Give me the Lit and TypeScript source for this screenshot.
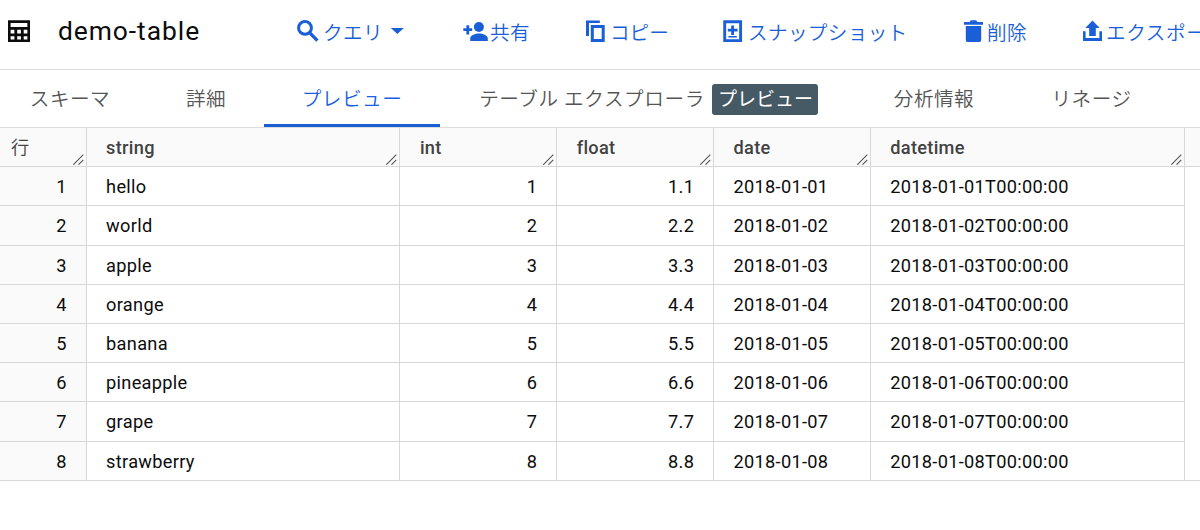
import { LitElement, html, css, svg } from "lit";
import { customElement } from "lit/decorators.js";
import { classMap } from "lit/directives/class-map.js";

const ICONS = {
  table: svg`<path fill-rule="evenodd" d="M2 4.3h22v21.8H2zM4.6 7v4h16.8V7zM4.6 13.8v3.6h3.8v-3.6zM11.2 13.8v3.6h3.7v-3.6zM17.7 13.8v3.6h3.7v-3.6zM4.6 20.3v3.3h3.8v-3.3zM11.2 20.3v3.3h3.7v-3.3zM17.7 20.3v3.3h3.7v-3.3z"/>`,
  search: svg`<circle cx="11" cy="11.9" r="6.4" fill="none" stroke="currentColor" stroke-width="3"/><path d="M15.3 16.4L23.4 24.6" stroke="currentColor" stroke-width="3.4" fill="none"/>`,
  share: svg`<circle cx="18.9" cy="11" r="5"/><path d="M10.2 25v-2.6c0-3.3 5.2-4.9 8.8-4.9s8.8 1.6 8.8 4.9V25z"/><path d="M6.4 9.2v3.1H3.3v2.7h3.1v3.4h2.8V15h3v-2.7h-3V9.2z"/>`,
  copy: svg`<path d="M3 4.4h13.8v2.7H6v12.9H3z"/><path d="M9.3 10.5h10.9v14H9.3z" fill="none" stroke="currentColor" stroke-width="3"/>`,
  snapshot: svg`<path d="M4.7 5.7h15.9v18.9H4.7z" fill="none" stroke="currentColor" stroke-width="2.9"/><path d="M11.2 9.4h2.8v3.4h3.6v2.6H14V19h-2.8v-3.6H7.8v-2.6h3.4zM8.4 20h8.4v1.5H8.4z"/>`,
  trash: svg`<path d="M3 6.1h5.6l1.2-1.8h5.4l1.2 1.8H22v2.7H3zM4.8 10.1h15.4v13.7c0 1.5-.9 2.3-2.3 2.3H7.1c-1.4 0-2.3-.8-2.3-2.3z"/>`,
  exportUp: svg`<path d="M12.5 4.4l7.2 7.7h-3.9v8H9.2v-8H5.3z"/><path d="M3 15.3h2.6v6.7h13.8v-6.7H22v9.6H3z"/>`,
};

type IconName = keyof typeof ICONS;

const icon = (name: IconName) =>
  html`<svg class="icon" width="28" height="30" viewBox="0 0 28 30" fill="currentColor" aria-hidden="true">${ICONS[name]}</svg>`;

const ACTIONS: { id: string; icon: IconName; label: string; menu?: boolean }[] = [
  { id: "query", icon: "search", label: "クエリ", menu: true },
  { id: "share", icon: "share", label: "共有" },
  { id: "copy", icon: "copy", label: "コピー" },
  { id: "snapshot", icon: "snapshot", label: "スナップショット" },
  { id: "delete", icon: "trash", label: "削除" },
  { id: "export", icon: "exportUp", label: "エクスポート" },
];

const TABS: { id: string; label: string; active?: boolean; badge?: string }[] = [
  { id: "schema", label: "スキーマ" },
  { id: "details", label: "詳細" },
  { id: "preview", label: "プレビュー", active: true },
  { id: "explorer", label: "テーブル エクスプローラ", badge: "プレビュー" },
  { id: "insights", label: "分析情報" },
  { id: "lineage", label: "リネージ" },
];

const COLUMNS = ["string", "int", "float", "date", "datetime"];
const WORDS = ["hello", "world", "apple", "orange", "banana", "pineapple", "grape", "strawberry"];
const ROWS = WORDS.map((word, i) => {
  const n = i + 1;
  return [word, `${n}`, `${n}.${n}`, `2018-01-0${n}`, `2018-01-0${n}T00:00:00`];
});

@customElement("app-root")
export class AppRoot extends LitElement {
  static styles = css`
    :host {
      display: block;
      width: 100%;
      height: 530px;
      overflow: hidden;
      background: #fff;
      color: #0c0c0c;
      font-family: Roboto, "Noto Sans CJK JP", sans-serif;
    }
    * { box-sizing: border-box; }
    .toolbar {
      display: grid;
      grid-template-columns: 52px 236px 166px 123px 137px 241px 119px 160px;
      height: 70px;
      padding-left: 6px;
      border-bottom: 1px solid #dcdcdc;
      white-space: nowrap;
    }
    .icon { display: block; flex: none; margin-top: 16px; }
    .title {
      margin: 0;
      font-size: 26.4px;
      font-weight: 400;
      line-height: 62px;
      letter-spacing: 0.95px;
    }
    .action {
      display: flex;
      color: #1a5fd8;
      font-size: 19.6px;
      font-weight: 350;
      letter-spacing: 0.35px;
      line-height: 68px;
    }
    .query .label { padding-left: 1px; }
    .query .caret { margin-left: 8px; }
    .share .label { padding-left: 2px; }
    .copy .label { margin-left: -1px; letter-spacing: 0; }
    .delete .label, .export .label { margin-left: -2px; }
    .export .label { letter-spacing: 0.6px; }
    .caret {
      width: 13px;
      height: 6px;
      margin-top: 28px;
      background: currentColor;
      clip-path: polygon(0 0, 100% 0, 50% 100%);
    }
    .tabs {
      display: grid;
      grid-template-columns: 140px 124px 176px 417px 154px 161px;
      height: 57px;
      font-size: 19.6px;
      font-weight: 350;
      letter-spacing: 0.5px;
      color: #555;
      white-space: nowrap;
    }
    .tab {
      display: flex;
      justify-content: center;
      height: 57px;
      line-height: 60px;
      border-bottom: 3px solid transparent;
    }
    .details { padding-left: 8px; }
    .explorer { letter-spacing: 0.6px; }
    .tab.active { color: #1a5fe0; border-bottom-color: #1a5fd8; }
    .badge {
      height: 31px;
      margin: 14px 0 0 7px;
      padding-left: 6px;
      width: 106px;
      border-radius: 3px;
      background: #455a64;
      color: #fff;
      font-weight: 400;
      font-size: 19px;
      letter-spacing: 0;
      line-height: 32px;
    }
    .table { border-top: 1px solid #dcdcdc; }
    .row {
      display: grid;
      grid-template-columns: 86.6px 313.8px 156.8px 156.8px 156.8px 313.8px 1fr;
      grid-template-rows: 39.2px;
      height: 39.2px;
    }
    .cell {
      height: 39.2px;
      border-right: 1px solid #d8d8d8;
      border-bottom: 1px solid #d8d8d8;
      padding: 0 18.8px 0 19.5px;
      font-size: 18.2px;
      line-height: 39.4px;
      letter-spacing: 0.3px;
      white-space: nowrap;
    }
    .index, .numeric { text-align: right; }
    .index { background: #fafafa; }
    .rest { border-right: 0; }
    .body .rest { border-bottom-color: transparent; }
    .body.last .rest { border-bottom-color: #d8d8d8; }
    .head .cell {
      display: flex;
      justify-content: space-between;
      background: #fafafa;
      color: #424242;
      font-weight: 500;
      padding-right: 2px;
    }
    .head .cell:first-child { padding-left: 11px; font-weight: 350; }
    .grip { align-self: flex-end; margin-bottom: 1px; }
  `;

  private grip() {
    return html`<svg class="grip" width="11" height="11" viewBox="0 0 11 11" fill="none" stroke="#555" stroke-width="1.1"><path d="M0.3 10.7L10.3 .7M5.5 10.7l4.8-4.8"/></svg>`;
  }

  render() {
    return html`
      <header class="toolbar">
        ${icon("table")}
        <h1 class="title">demo-table</h1>
        ${ACTIONS.map(
          (a) => html`<div class="action ${a.id}">
            ${icon(a.icon)}<span class="label">${a.label}</span>${a.menu ? html`<span class="caret"></span>` : null}
          </div>`
        )}
      </header>
      <nav class="tabs">
        ${TABS.map(
          (t) => html`<div class=${classMap({ tab: true, [t.id]: true, active: !!t.active })}>
            <span>${t.label}</span>${t.badge ? html`<span class="badge">${t.badge}</span>` : null}
          </div>`
        )}
      </nav>
      <main class="table">
        <div class="row head">
          <div class="cell"><span>行</span>${this.grip()}</div>
          ${COLUMNS.map((c) => html`<div class="cell"><span>${c}</span>${this.grip()}</div>`)}
          <div class="cell rest"></div>
        </div>
        ${ROWS.map(
          (r, i) => html`<div class=${classMap({ row: true, body: true, last: i === ROWS.length - 1 })}>
            <div class="cell index">${i + 1}</div>
            ${r.map((v, c) => html`<div class=${classMap({ cell: true, numeric: c === 1 || c === 2 })}>${v}</div>`)}
            <div class="cell rest"></div>
          </div>`
        )}
      </main>
    `;
  }
}
